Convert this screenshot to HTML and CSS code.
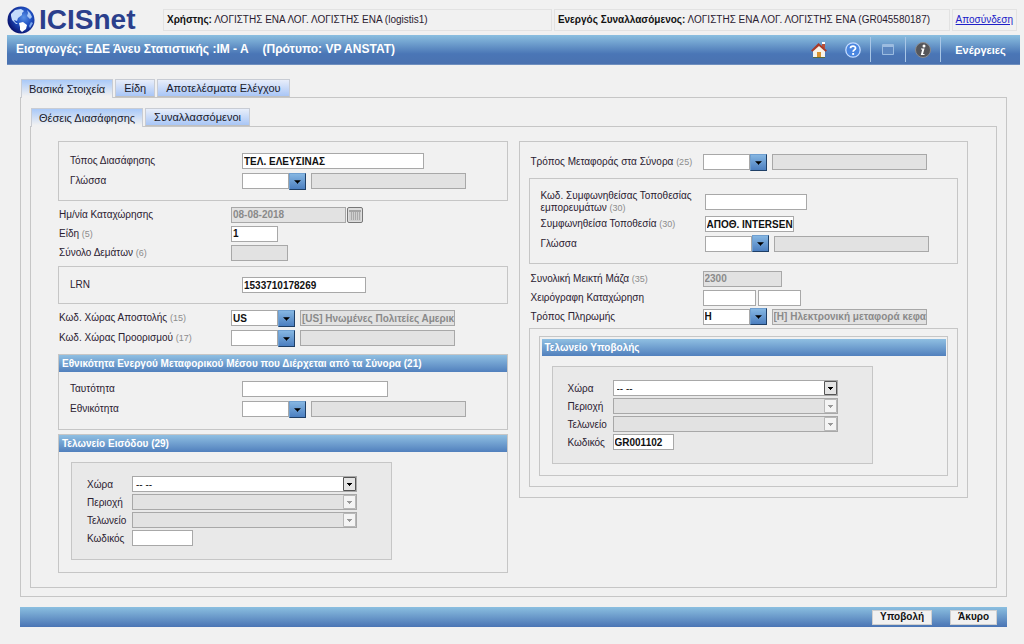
FILE: index.html
```html
<!DOCTYPE html>
<html lang="el">
<head>
  <meta charset="UTF-8">
  <meta name="viewport" content="width=device-width, initial-scale=1.0">
  <title>ICISnet</title>
  <link rel="stylesheet" href="styles.css">
</head>
<body>
  <svg class="sprite" width="0" height="0">
    <symbol id="arrow" viewBox="0 0 17 17"><path d="M5 7h7v1h-1v1h-1v1H9v1H8v-1H7V9H6V8H5z"/></symbol>
  </svg>

  <header class="top">
    <div class="logo">
      <svg width="28" height="28" viewBox="0 0 28 28">
        <defs>
          <radialGradient id="globe" cx="60%" cy="40%" r="62%">
            <stop offset="0" stop-color="#5a93e6"/>
            <stop offset="0.5" stop-color="#1f4fc0"/>
            <stop offset="1" stop-color="#0a1470"/>
          </radialGradient>
        </defs>
        <circle cx="14" cy="14" r="13.5" fill="url(#globe)"/>
        <path d="M4 8L8 4l6-1 3 2-2 2 0 2-4 3-1 3-3-1 1 2 3 2-2 0-4-4-1-4z" fill="#c4dcfb"/>
        <path d="M12 17l4-1 4 3-1 4-4 3-2-2 0-3z" fill="#fff"/>
        <path d="M20 4l3 3 2 4-2 2-3-3 1-3z" fill="#a9c8f6"/>
        <path d="M24 16l2 1-3 5-1-2z" fill="#7ba6ea"/>
      </svg>
      <span class="logo-text">ICISnet</span>
    </div>
    <div class="user-box user"><b>Χρήστης:</b> ΛΟΓΙΣΤΗΣ ΕΝΑ ΛΟΓ. ΛΟΓΙΣΤΗΣ ΕΝΑ (logistis1)</div>
    <div class="user-box trader"><b>Ενεργός Συναλλασόμενος:</b> ΛΟΓΙΣΤΗΣ ΕΝΑ ΛΟΓ. ΛΟΓΙΣΤΗΣ ΕΝΑ (GR045580187)</div>
    <div class="user-box"><a href="#">Αποσύνδεση</a></div>
  </header>

  <div class="title-bar">
    <h1>Εισαγωγές: ΕΔΕ Άνευ Στατιστικής :IM - A <span class="template">(Πρότυπο: VP ANSTAT)</span></h1>
    <nav class="tools">
      <button type="button" class="tool" aria-label="Αρχική">
        <svg width="16" height="18" viewBox="0 0 16 18">
          <path d="M11 2h3v5h-3z" fill="#b9503a"/>
          <path d="M2 9l6-6 6 6v7.500H2z" fill="#f7f3ea"/>
          <path d="M0 9.500L7.500 2 16 9.500l-1.500 1.200L8 5 1.500 10.700z" fill="#a83a28"/>
          <path d="M6 11h4v5.500H6z" fill="#d9922e"/>
          <path d="M2 16h12v1H2z" fill="#5a6b3c"/>
          <path d="M11 1h3v2h-3z" fill="#fff"/>
        </svg>
      </button>
      <button type="button" class="tool" aria-label="Βοήθεια">
        <svg width="16" height="16" viewBox="0 0 16 16">
          <circle cx="8" cy="8" r="7.200" fill="#4a86e0" stroke="#c4dcff" stroke-width="1.300"/>
          <path d="M5.500 6.300C5.500 3.300 10.600 3.400 10.500 6.200c0 1.700-2.400 1.700-2.400 3.600" fill="none" stroke="#fff" stroke-width="1.800"/>
          <path d="M7.200 11h1.900v1.900H7.200z" fill="#fff"/>
        </svg>
      </button>
      <button type="button" class="tool divided" aria-label="Παράθυρο">
        <svg width="12" height="11" viewBox="0 0 12 11">
          <path d="M0.500 0.500h11v10H0.500z" fill="#5d87c0" stroke="#9cbce0"/>
          <path d="M1 1h10v2H1z" fill="#9cbce0"/>
        </svg>
      </button>
      <button type="button" class="tool divided" aria-label="Πληροφορίες">
        <svg width="16" height="16" viewBox="0 0 16 16">
          <circle cx="8" cy="8" r="7.500" fill="#55565a" stroke="#8a8c90"/>
          <circle cx="9" cy="4" r="1.500" fill="#fff"/>
          <path d="M6 6.500h3.500L8 12h1.500v1H5.800l1.400-5.500H6z" fill="#fff"/>
        </svg>
      </button>
      <button type="button" class="actions divided">Ενέργειες</button>
    </nav>
  </div>

  <main>
    <div class="tabs">
      <button type="button" class="tab active">Βασικά Στοιχεία</button>
      <button type="button" class="tab">Είδη</button>
      <button type="button" class="tab">Αποτελέσματα Ελέγχου</button>
    </div>
    <div class="panel outer">
      <div class="tabs">
        <button type="button" class="tab active">Θέσεις Διασάφησης</button>
        <button type="button" class="tab">Συναλλασσόμενοι</button>
      </div>
      <form class="panel columns" id="declaration">
        <div class="column">
          <div class="group place">
            <div class="row">
              <label for="place">Τόπος Διασάφησης</label>
              <input type="text" id="place" class="w-xl" value="ΤΕΛ. ΕΛΕΥΣΙΝΑΣ">
            </div>
            <div class="row">
              <label for="lang">Γλώσσα</label>
              <input type="text" id="lang" class="w-code">
              <button type="button" class="pick" aria-label="Επιλογή"><svg><use href="#arrow"/></svg></button>
              <input type="text" class="w-desc" aria-label="Περιγραφή" disabled>
            </div>
          </div>

          <div class="plain">
            <div class="row short">
              <label for="date">Ημ/νία Καταχώρησης</label>
              <input type="text" id="date" class="w-date" value="08-08-2018" disabled>
              <button type="button" class="calendar" aria-label="Ημερολόγιο">
                <svg width="12" height="12" viewBox="0 0 12 12">
                  <path d="M0 1h12v11H0z" fill="#cfcfcf"/>
                  <path d="M0 1h12v2H0z" fill="#a4a4a4"/>
                  <path d="M2.500 3v8M4.500 3v8M6.500 3v8M8.500 3v8M10.500 3v8" stroke="#aaa"/>
                </svg>
              </button>
            </div>
            <div class="row short">
              <label for="items">Είδη <small>(5)</small></label>
              <input type="text" id="items" class="w-code" value="1">
            </div>
            <div class="row short">
              <label for="packages">Σύνολο Δεμάτων <small>(6)</small></label>
              <input type="text" id="packages" class="w-packages" disabled>
            </div>
          </div>

          <div class="group lrn">
            <div class="row">
              <label for="lrn">LRN</label>
              <input type="text" id="lrn" class="w-l" value="1533710178269">
            </div>
          </div>

          <div class="plain">
            <div class="row">
              <label for="from">Κωδ. Χώρας Αποστολής <small>(15)</small></label>
              <input type="text" id="from" class="w-code" value="US">
              <button type="button" class="pick" aria-label="Επιλογή"><svg><use href="#arrow"/></svg></button>
              <input type="text" class="w-desc" aria-label="Περιγραφή" value="[US] Ηνωμένες Πολιτείες Αμερικής" disabled>
            </div>
            <div class="row">
              <label for="to">Κωδ. Χώρας Προορισμού <small>(17)</small></label>
              <input type="text" id="to" class="w-code">
              <button type="button" class="pick" aria-label="Επιλογή"><svg><use href="#arrow"/></svg></button>
              <input type="text" class="w-desc" aria-label="Περιγραφή" disabled>
            </div>
          </div>

          <div class="group transport">
            <h2>Εθνικότητα Ενεργού Μεταφορικού Μέσου που Διέρχεται από τα Σύνορα (21)</h2>
            <div class="rows">
              <div class="row">
                <label for="identity">Ταυτότητα</label>
                <input type="text" id="identity" class="w-m">
              </div>
              <div class="row">
                <label for="nationality">Εθνικότητα</label>
                <input type="text" id="nationality" class="w-code">
                <button type="button" class="pick" aria-label="Επιλογή"><svg><use href="#arrow"/></svg></button>
                <input type="text" class="w-desc" aria-label="Περιγραφή" disabled>
              </div>
            </div>
          </div>

          <div class="group entry">
            <h2>Τελωνείο Εισόδου (29)</h2>
            <div class="office">
              <div class="office-row">
                <label for="country1">Χώρα</label>
                <select id="country1"><option>-- --</option></select>
              </div>
              <div class="office-row">
                <label for="region1">Περιοχή</label>
                <select id="region1" disabled></select>
              </div>
              <div class="office-row">
                <label for="customs1">Τελωνείο</label>
                <select id="customs1" disabled></select>
              </div>
              <div class="office-row">
                <label for="code1">Κωδικός</label>
                <input type="text" id="code1" class="w-office">
              </div>
            </div>
          </div>
        </div>

        <div class="column group right">
          <div class="plain first">
            <div class="row">
              <label for="mode">Τρόπος Μεταφοράς στα Σύνορα <small>(25)</small></label>
              <input type="text" id="mode" class="w-code">
              <button type="button" class="pick" aria-label="Επιλογή"><svg><use href="#arrow"/></svg></button>
              <input type="text" class="w-desc" aria-label="Περιγραφή" disabled>
            </div>
          </div>

          <div class="group location">
            <div class="row tall">
              <label for="loccode">Κωδ. Συμφωνηθείσας Τοποθεσίας<br>εμπορευμάτων <small>(30)</small></label>
              <input type="text" id="loccode" class="w-s">
            </div>
            <div class="row">
              <label for="location">Συμφωνηθείσα Τοποθεσία <small>(30)</small></label>
              <input type="text" id="location" class="w-location" value="ΑΠΟΘ. INTERSEN">
            </div>
            <div class="row short">
              <label for="loclang">Γλώσσα</label>
              <input type="text" id="loclang" class="w-code">
              <button type="button" class="pick" aria-label="Επιλογή"><svg><use href="#arrow"/></svg></button>
              <input type="text" class="w-desc" aria-label="Περιγραφή" disabled>
            </div>
          </div>

          <div class="plain totals">
            <div class="row short">
              <label for="mass">Συνολική Μεικτή Μάζα <small>(35)</small></label>
              <input type="text" id="mass" class="w-mass" value="2300" disabled>
            </div>
            <div class="row short">
              <label for="manual">Χειρόγραφη Καταχώρηση</label>
              <input type="text" id="manual" class="w-manual">
              <input type="text" class="w-manual-no" aria-label="Αριθμός">
            </div>
            <div class="row short">
              <label for="payment">Τρόπος Πληρωμής</label>
              <input type="text" id="payment" class="w-code" value="H">
              <button type="button" class="pick" aria-label="Επιλογή"><svg><use href="#arrow"/></svg></button>
              <input type="text" class="w-desc" aria-label="Περιγραφή" value="[H] Ηλεκτρονική μεταφορά κεφαλαίων" disabled>
            </div>
          </div>

          <div class="group lodging">
            <div class="group lodging-inner">
              <h2>Τελωνείο Υποβολής</h2>
              <div class="office">
                <div class="office-row">
                  <label for="country2">Χώρα</label>
                  <select id="country2"><option>-- --</option></select>
                </div>
                <div class="office-row">
                  <label for="region2">Περιοχή</label>
                  <select id="region2" disabled></select>
                </div>
                <div class="office-row">
                  <label for="customs2">Τελωνείο</label>
                  <select id="customs2" disabled></select>
                </div>
                <div class="office-row">
                  <label for="code2">Κωδικός</label>
                  <input type="text" id="code2" class="w-office" value="GR001102">
                </div>
              </div>
            </div>
          </div>
        </div>
      </form>
    </div>

    <footer class="bottom-bar">
      <button type="submit" form="declaration">Υποβολή</button>
      <button type="button">Άκυρο</button>
    </footer>
  </main>
</body>
</html>
```
FILE: styles.css
```css
* {
  box-sizing: border-box;
}
body {
  margin: 0;
  background-color: #f1f1f1;
  color: #2a2030;
  font-family: "Liberation Sans", Arial, sans-serif;
  font-size: 10px;
}
button, input, select {
  font-family: inherit;
  font-size: 10px;
  margin: 0;
}
button {
  cursor: pointer;
}
.sprite {
  display: none;
}

/* header */
.top {
  display: flex;
  align-items: center;
  height: 35px;
  padding: 4px 7px 0;
  gap: 2px;
}
.logo {
  display: flex;
  align-items: center;
  width: 154px;
  gap: 4px;
}
.logo-text {
  font-size: 28px;
  line-height: 28px;
  font-weight: bold;
  color: #2b3f8c;
}
.user-box {
  height: 22px;
  line-height: 20px;
  padding: 0 3px;
  border: 1px solid #e2e2e2;
  white-space: nowrap;
}
.user-box b {
  color: #111;
}
.user {
  flex: 389;
}
.trader {
  flex: 396;
}
.user-box a {
  color: #2020c8;
}
.title-bar {
  display: flex;
  justify-content: space-between;
  height: 30px;
  margin: 0 4px 0 7px;
  padding-left: 9px;
  color: white;
  background: linear-gradient(#8bbfe0, #4a76b6 65%, #4a72b0);
  border-bottom: 1px solid #6f8fbf;
}
.title-bar h1 {
  margin: 0;
  font-size: 12px;
  line-height: 29px;
}
.template {
  margin-left: 11px;
}
.tools {
  display: flex;
  align-items: center;
}
.tools button {
  display: flex;
  align-items: center;
  justify-content: center;
  height: 25px;
  padding: 0;
  border: none;
  background: none;
}
.tools .tool {
  width: 34px;
}
.tools .divided {
  width: 35px;
  border-left: 1px solid #a9c6e6;
}
.tools .actions {
  width: 80px;
  color: white;
  font-size: 11px;
  font-weight: bold;
}

/* tabs and panels */
main {
  padding: 14px 17px 0 20px;
}
.tabs {
  display: flex;
  gap: 2px;
  padding-left: 1px;
}
.tab {
  height: 18px;
  padding: 0 8px;
  border: 1px solid #c8ccd4;
  border-bottom-color: #c0c0c0;
  font-size: 11px;
  color: #1a1a2a;
  background: linear-gradient(#e8eefa, #a9c6f6);
}
.tab.active {
  height: 19px;
  margin-bottom: -1px;
  padding: 0 7px;
  border-bottom: none;
  background: linear-gradient(#a9c9f8, #f1f1f1 90%);
}
.panel {
  border: 1px solid #c6c6c6;
}
.outer {
  padding: 10px 9px 8px;
}
.columns {
  display: grid;
  grid-template-columns: 1fr 1fr;
  align-items: start;
  gap: 11px;
  padding: 14px 28px 14px 27px;
}
.group {
  border: 1px solid #c6c6c6;
}
.group h2 {
  margin: 0;
  padding-left: 3px;
  height: 17px;
  font-size: 10px;
  line-height: 17px;
  color: white;
  background: linear-gradient(#8fbfe2, #5180bd);
}

/* form rows */
.row {
  display: flex;
  align-items: center;
  height: 20px;
}
.row.short {
  height: 19px;
}
.row.tall {
  height: 25px;
}
.row label {
  width: 172px;
  line-height: 12px;
}
.location .row label {
  width: 164px;
}
label small {
  font-size: 9px;
  line-height: 10px;
  color: #8c8c8c;
}
input {
  height: 16px;
  padding: 0 0 0 1px;
  border: 1px solid #a8a8a8;
  background-color: white;
  color: #111;
  font-weight: bold;
}
input:disabled {
  background-color: #e2e2e2;
  color: #8a8a8a;
}
.w-code { width: 47px; }
.w-desc { width: 155px; margin-left: 5px; }
.w-date { width: 115px; }
.w-packages { width: 57px; }
.w-xl { width: 182px; }
.w-l { width: 124px; }
.w-m { width: 146px; }
.w-s { width: 102px; }
.w-location { width: 89px; }
.w-mass { width: 79px; }
.w-manual { width: 53px; }
.w-manual-no { width: 43px; margin-left: 2px; }
.w-office { width: 61px; }
.pick {
  width: 17px;
  height: 17px;
  padding: 0;
  border: 1px solid #6f9fd0;
  border-right-color: #1f3f66;
  border-bottom-color: #1f3f66;
  background: linear-gradient(#85b6e2, #4c7fc0);
}
.pick svg {
  display: block;
  width: 15px;
  height: 15px;
}
.calendar {
  display: flex;
  align-items: center;
  justify-content: center;
  width: 16px;
  height: 16px;
  padding: 0;
  margin-left: 1px;
  border: 1px solid #777;
  border-radius: 2px;
  background-color: #ddd;
}

/* left column */
.place {
  padding: 9px 11px;
}
.plain {
  padding: 4px 1px;
}
.lrn {
  padding: 8px 11px;
}
.transport {
  margin-top: 2px;
}
.transport .rows {
  padding: 7px 11px 10px;
}
.entry {
  margin-top: 4px;
  padding-bottom: 12px;
}

/* right column */
.right {
  padding: 0 9px 10px;
}
.right .first {
  padding: 10px 2px 6px;
}
.location {
  padding: 10px 11px;
}
.right .totals {
  padding: 5px 2px 2px;
}
.lodging {
  padding: 7px 9px 10px;
}
.lodging-inner {
  padding: 2px 1px 11px 2px;
}

/* customs office box */
.office {
  width: fit-content;
  margin: 10px 0 0 12px;
  padding: 12px 34px 12px 15px;
  border: 1px solid #c6c6c6;
  background-color: #e9e9e9;
}
.lodging .office {
  margin-left: 10px;
}
.office-row {
  display: flex;
  align-items: center;
  height: 18px;
}
.office-row label {
  width: 45px;
}
select {
  width: 225px;
  height: 16px;
  padding: 0 3px;
  border: 1px solid #a8a8a8;
  border-radius: 0;
  color: #111;
  appearance: none;
  background: white url("data:image/svg+xml,%3Csvg xmlns='http://www.w3.org/2000/svg' width='13' height='14'%3E%3Cpath d='M.5.5h12v13H.5z' fill='%23e4e4e4' stroke='%23555'/%3E%3Cpath d='M4 6h5v1H8v1H7v1H6V8H5V7H4z'/%3E%3C/svg%3E") no-repeat right;
}
select:disabled {
  opacity: 1;
  background: #e2e2e2 url("data:image/svg+xml,%3Csvg xmlns='http://www.w3.org/2000/svg' width='13' height='14'%3E%3Cpath d='M.5.5h12v13H.5z' fill='%23f4f4f4' stroke='%23b8b8b8'/%3E%3Cpath d='M4 6h5v1H8v1H7v1H6V8H5V7H4z' fill='%23999'/%3E%3C/svg%3E") no-repeat right;
}

/* bottom bar */
.bottom-bar {
  display: flex;
  justify-content: flex-end;
  align-items: center;
  gap: 18px;
  height: 20px;
  margin-top: 10px;
  padding-right: 10px;
  background: linear-gradient(#8bbfe0, #4a74b4);
}
.bottom-bar button {
  height: 15px;
  padding: 0 7px;
  border: 1px solid #d0d0d0;
  background-color: #f1f1f1;
  color: #111;
  font-weight: bold;
  line-height: 12px;
}
```
